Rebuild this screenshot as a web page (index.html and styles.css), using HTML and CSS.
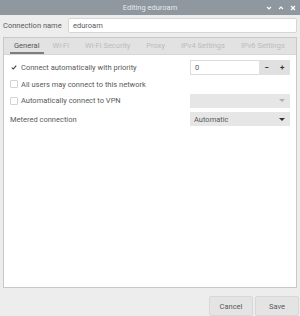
FILE: index.html
```html
<!DOCTYPE html>
<html lang="en">
<head>
  <meta charset="UTF-8" />
  <title>Editing eduroam</title>
  <link rel="stylesheet" href="styles.css">
</head>
<body>
  <div class="window">
    <div class="titlebar">
      <span class="title">Editing eduroam</span>
      <div class="wm-buttons">
        <svg width="6" height="6" viewBox="0 0 6 6"><path d="M1 2l2 2 2-2" fill="none" stroke="#fff" stroke-width="1.2"/></svg>
        <svg width="6" height="6" viewBox="0 0 6 6"><path d="M1 4l2-2 2 2" fill="none" stroke="#fff" stroke-width="1.2"/></svg>
        <svg width="6" height="6" viewBox="0 0 6 6"><path d="M1 1l4 4M5 1l-4 4" fill="none" stroke="#fff" stroke-width="1.2"/></svg>
      </div>
    </div>

    <div class="name-row">
      <label>Connection name</label>
      <div class="entry name-entry">eduroam</div>
    </div>

    <div class="notebook">
      <div class="tabs">
        <span class="tab active">General</span>
        <span class="tab">Wi-Fi</span>
        <span class="tab">Wi-Fi Security</span>
        <span class="tab">Proxy</span>
        <span class="tab">IPv4 Settings</span>
        <span class="tab">IPv6 Settings</span>
      </div>
      <div class="page">
        <div class="row">
          <label class="check"><span class="box checked"><svg width="8" height="7" viewBox="0 0 8 7"><path d="M1 3.5l2 2 4-4.5" fill="none" stroke="#333" stroke-width="1.4"/></svg></span>Connect automatically with priority</label>
          <div class="spin">
            <div class="spin-entry">0</div>
            <div class="spin-btns"><span>−</span><span>+</span></div>
          </div>
        </div>
        <div class="row">
          <label class="check"><span class="box"></span>All users may connect to this network</label>
        </div>
        <div class="row">
          <label class="check"><span class="box"></span>Automatically connect to VPN</label>
          <div class="combo disabled"><span></span><span class="caret"></span></div>
        </div>
        <div class="row">
          <label class="plain">Metered connection</label>
          <div class="combo"><span>Automatic</span><span class="caret"></span></div>
        </div>
      </div>
    </div>

    <div class="actions">
      <button class="btn">Cancel</button>
      <button class="btn">Save</button>
    </div>
  </div>
</body>
</html>
```

FILE: styles.css
```css
/* Общие стили */
body { margin: 0; background: #ededed; font-family: Roboto, "Liberation Sans", sans-serif; font-size: 7.5px; color: #5a5a5a; }
.window { width: 300px; height: 316px; display: flex; flex-direction: column; overflow: hidden; }

/* Заголовок окна */
.titlebar { height: 15px; background: #8f979f; position: relative; display: flex; align-items: center; justify-content: center; }
.titlebar .title { color: #e6e9ec; font-size: 7.5px; }
.wm-buttons { position: absolute; right: 4px; top: 5px; display: flex; gap: 6px; }

/* Имя соединения */
.name-row { display: flex; align-items: center; padding: 3px 3px 0 3px; height: 16px; }
.name-row label { width: 65px; }
.entry { background: #fff; border: 1px solid #d6d6d6; border-radius: 2px; height: 13px; line-height: 13px; padding: 0 4px; }
.name-entry { flex: 1; }

/* Вкладки */
.notebook { margin: 3px 3px 0 3px; border: 1px solid #c8c8c8; height: 252px; display: flex; flex-direction: column; }
.tabs { height: 16px; background: #e2e2e2; display: flex; align-items: center; padding-left: 6px; border-bottom: 1px solid #d6d6d6; overflow: hidden; }
.tab { color: #bcbcbc; margin-right: 16px; height: 16px; line-height: 15px; box-sizing: border-box; white-space: nowrap; flex-shrink: 0; }
.tab.active { color: #555; border-bottom: 2px solid #7d7d7d; padding: 0 4px; margin-right: 9px; }
.page { flex: 1; background: #fff; padding: 5px 6px 0 6px; }
.row { display: flex; align-items: center; justify-content: space-between; height: 16.5px; }
.row:nth-child(4) { margin-top: 2px; }
.check { display: flex; align-items: center; }
.box { width: 6px; height: 6px; border: 1px solid #d4d4d4; border-radius: 1px; margin-right: 3px; display: inline-flex; align-items: center; justify-content: center; }
.box.checked { border-color: transparent; }

/* Поля справа */
.spin { width: 100px; height: 15px; display: flex; }
.spin-entry { width: 64px; background: #fff; border: 1px solid #dcdcdc; border-right: none; padding-left: 4px; line-height: 13px; }
.spin-btns { flex: 1; background: #e0e0e0; display: flex; justify-content: space-around; align-items: center; color: #333; font-size: 8px; font-weight: bold; }
.combo { width: 100px; height: 14px; background: #e6e6e6; display: flex; justify-content: space-between; align-items: center; padding: 0 4px; box-sizing: border-box; }
.caret { width: 0; height: 0; border-left: 3px solid transparent; border-right: 3px solid transparent; border-top: 3px solid #333; margin-right: 1px; }
.combo.disabled .caret { border-top-color: #b0b0b0; }

/* Кнопки */
.actions { display: flex; justify-content: flex-end; gap: 2px; padding: 8px 1px 0 0; }
.btn { width: 44px; height: 20px; background: #e4e4e4; border: 1px solid #d8d8d8; border-radius: 2px; font-family: inherit; font-size: 7.5px; color: #5a5a5a; padding: 0; }
```
